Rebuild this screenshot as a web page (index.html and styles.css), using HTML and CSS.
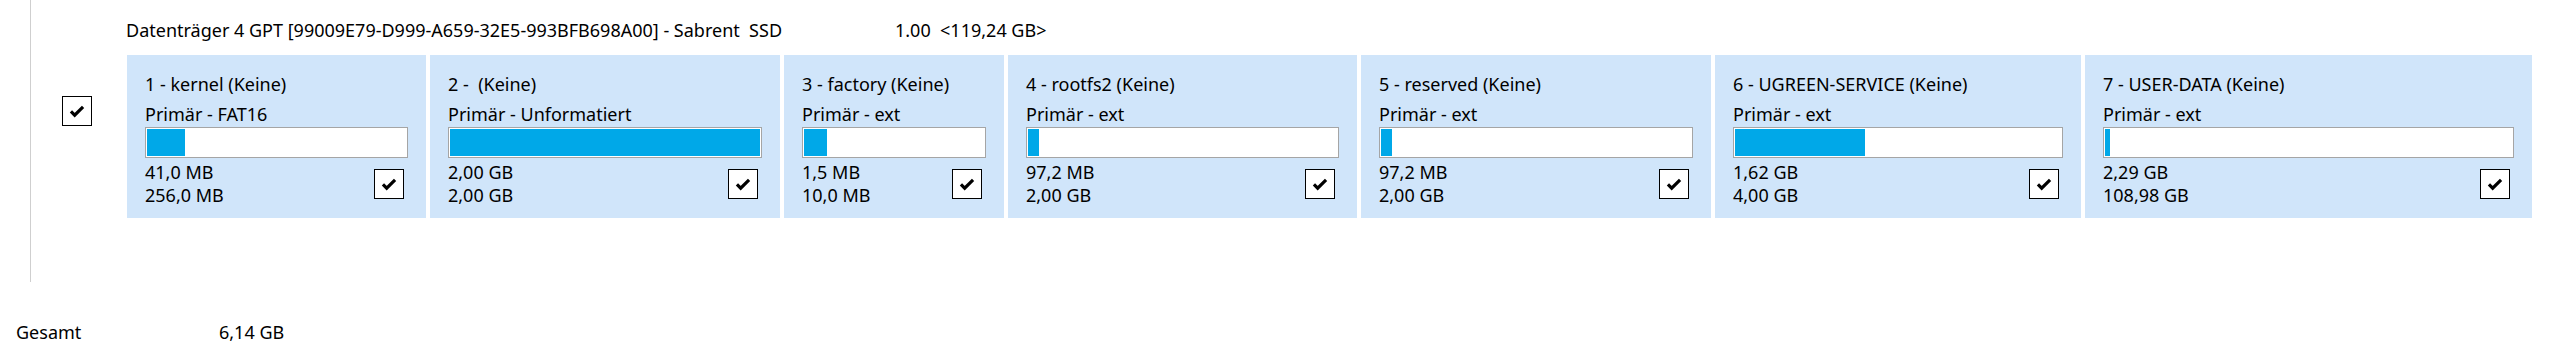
FILE: index.html
```html
<!DOCTYPE html>
<html lang="de">
<head>
  <meta charset="UTF-8">
  <title>Datenträger</title>
  <link rel="stylesheet" href="styles.css">
</head>
<body>

  <div class="disk">
    <div class="disk-check">
      <span class="checkbox"><svg viewBox="0 0 30 30"><path d="M8.5 15.5 L12.5 19.5 L21.5 10.5" /></svg></span>
    </div>

    <div class="disk-body">
      <div class="disk-header">
        <span class="disk-name">Datenträger 4 GPT [99009E79-D999-A659-32E5-993BFB698A00] - Sabrent  SSD</span>
        <span class="disk-size">1.00  &lt;119,24 GB&gt;</span>
      </div>

      <div class="partitions">
        <div class="partition" style="width: 299px">
          <div class="part-title">1 - kernel (Keine)</div>
          <div class="part-type">Primär - FAT16</div>
          <div class="bar"><div class="fill" style="width: 14.7%"></div></div>
          <div class="part-foot">
            <div class="sizes"><div>41,0 MB</div><div>256,0 MB</div></div>
            <span class="checkbox"><svg viewBox="0 0 30 30"><path d="M8.5 15.5 L12.5 19.5 L21.5 10.5" /></svg></span>
          </div>
        </div>

        <div class="partition" style="width: 350px">
          <div class="part-title">2 -  (Keine)</div>
          <div class="part-type">Primär - Unformatiert</div>
          <div class="bar"><div class="fill" style="width: 100%"></div></div>
          <div class="part-foot">
            <div class="sizes"><div>2,00 GB</div><div>2,00 GB</div></div>
            <span class="checkbox"><svg viewBox="0 0 30 30"><path d="M8.5 15.5 L12.5 19.5 L21.5 10.5" /></svg></span>
          </div>
        </div>

        <div class="partition" style="width: 220px">
          <div class="part-title">3 - factory (Keine)</div>
          <div class="part-type">Primär - ext</div>
          <div class="bar"><div class="fill" style="width: 13%"></div></div>
          <div class="part-foot">
            <div class="sizes"><div>1,5 MB</div><div>10,0 MB</div></div>
            <span class="checkbox"><svg viewBox="0 0 30 30"><path d="M8.5 15.5 L12.5 19.5 L21.5 10.5" /></svg></span>
          </div>
        </div>

        <div class="partition" style="width: 349px">
          <div class="part-title">4 - rootfs2 (Keine)</div>
          <div class="part-type">Primär - ext</div>
          <div class="bar"><div class="fill" style="width: 3.4%"></div></div>
          <div class="part-foot">
            <div class="sizes"><div>97,2 MB</div><div>2,00 GB</div></div>
            <span class="checkbox"><svg viewBox="0 0 30 30"><path d="M8.5 15.5 L12.5 19.5 L21.5 10.5" /></svg></span>
          </div>
        </div>

        <div class="partition" style="width: 350px">
          <div class="part-title">5 - reserved (Keine)</div>
          <div class="part-type">Primär - ext</div>
          <div class="bar"><div class="fill" style="width: 3.5%"></div></div>
          <div class="part-foot">
            <div class="sizes"><div>97,2 MB</div><div>2,00 GB</div></div>
            <span class="checkbox"><svg viewBox="0 0 30 30"><path d="M8.5 15.5 L12.5 19.5 L21.5 10.5" /></svg></span>
          </div>
        </div>

        <div class="partition" style="width: 366px">
          <div class="part-title">6 - UGREEN-SERVICE (Keine)</div>
          <div class="part-type">Primär - ext</div>
          <div class="bar"><div class="fill" style="width: 40%"></div></div>
          <div class="part-foot">
            <div class="sizes"><div>1,62 GB</div><div>4,00 GB</div></div>
            <span class="checkbox"><svg viewBox="0 0 30 30"><path d="M8.5 15.5 L12.5 19.5 L21.5 10.5" /></svg></span>
          </div>
        </div>

        <div class="partition" style="width: 447px">
          <div class="part-title">7 - USER-DATA (Keine)</div>
          <div class="part-type">Primär - ext</div>
          <div class="bar"><div class="fill" style="width: 1.3%"></div></div>
          <div class="part-foot">
            <div class="sizes"><div>2,29 GB</div><div>108,98 GB</div></div>
            <span class="checkbox"><svg viewBox="0 0 30 30"><path d="M8.5 15.5 L12.5 19.5 L21.5 10.5" /></svg></span>
          </div>
        </div>
      </div>
    </div>
  </div>

  <div class="total">
    <span class="total-label">Gesamt</span>
    <span class="total-value">6,14 GB</span>
  </div>

</body>
</html>
```

FILE: styles.css
```css
body {
  margin: 0;
  padding: 0;
  font-family: 'Noto Sans', 'Liberation Sans', sans-serif;
  font-size: 18px;
  line-height: 24px;
  color: #000;
  background: #fff;
}

/* Disk row with the thin guide line on the left */
.disk {
  display: flex;
  margin-left: 30px;
  height: 282px;
  border-left: 1px solid #cfcfcf;
}

.disk-check {
  width: 65px;
  padding: 96px 0 0 31px;
  flex-shrink: 0;
}

.disk-body {
  flex: 1;
}

.disk-header {
  display: flex;
  padding-top: 18px;
  margin-left: -1px;
  height: 37px;
  white-space: pre;
}

.disk-name {
  width: 769px;
}

/* Partition cards */
.partitions {
  display: flex;
  gap: 4px;
}

.partition {
  box-sizing: border-box;
  background: #d0e5fa;
  padding: 17px 18px 11px;
  flex-shrink: 0;
}

.part-title {
  white-space: pre;
  margin-bottom: 6px;
}

.bar {
  box-sizing: border-box;
  height: 31px;
  margin-top: 1px;
  padding: 1px;
  border: 1px solid #a5a5a5;
  background: #fff;
}

.fill {
  height: 100%;
  background: #00a8e8;
}

.part-foot {
  display: flex;
  justify-content: space-between;
  align-items: center;
  margin-top: 3px;
}

.sizes {
  line-height: 23px;
}

.checkbox {
  display: block;
  box-sizing: border-box;
  width: 30px;
  height: 30px;
  border: 1px solid #000;
  background: #fff;
  margin-right: 4px;
}

.checkbox svg {
  display: block;
  width: 28px;
  height: 28px;
}

.checkbox path {
  fill: none;
  stroke: #000;
  stroke-width: 3.4;
}

.disk-check .checkbox {
  margin-right: 0;
}

/* Total row */
.total {
  display: flex;
  margin-top: 38px;
  padding-left: 16px;
}

.total-label {
  width: 203px;
}
```
